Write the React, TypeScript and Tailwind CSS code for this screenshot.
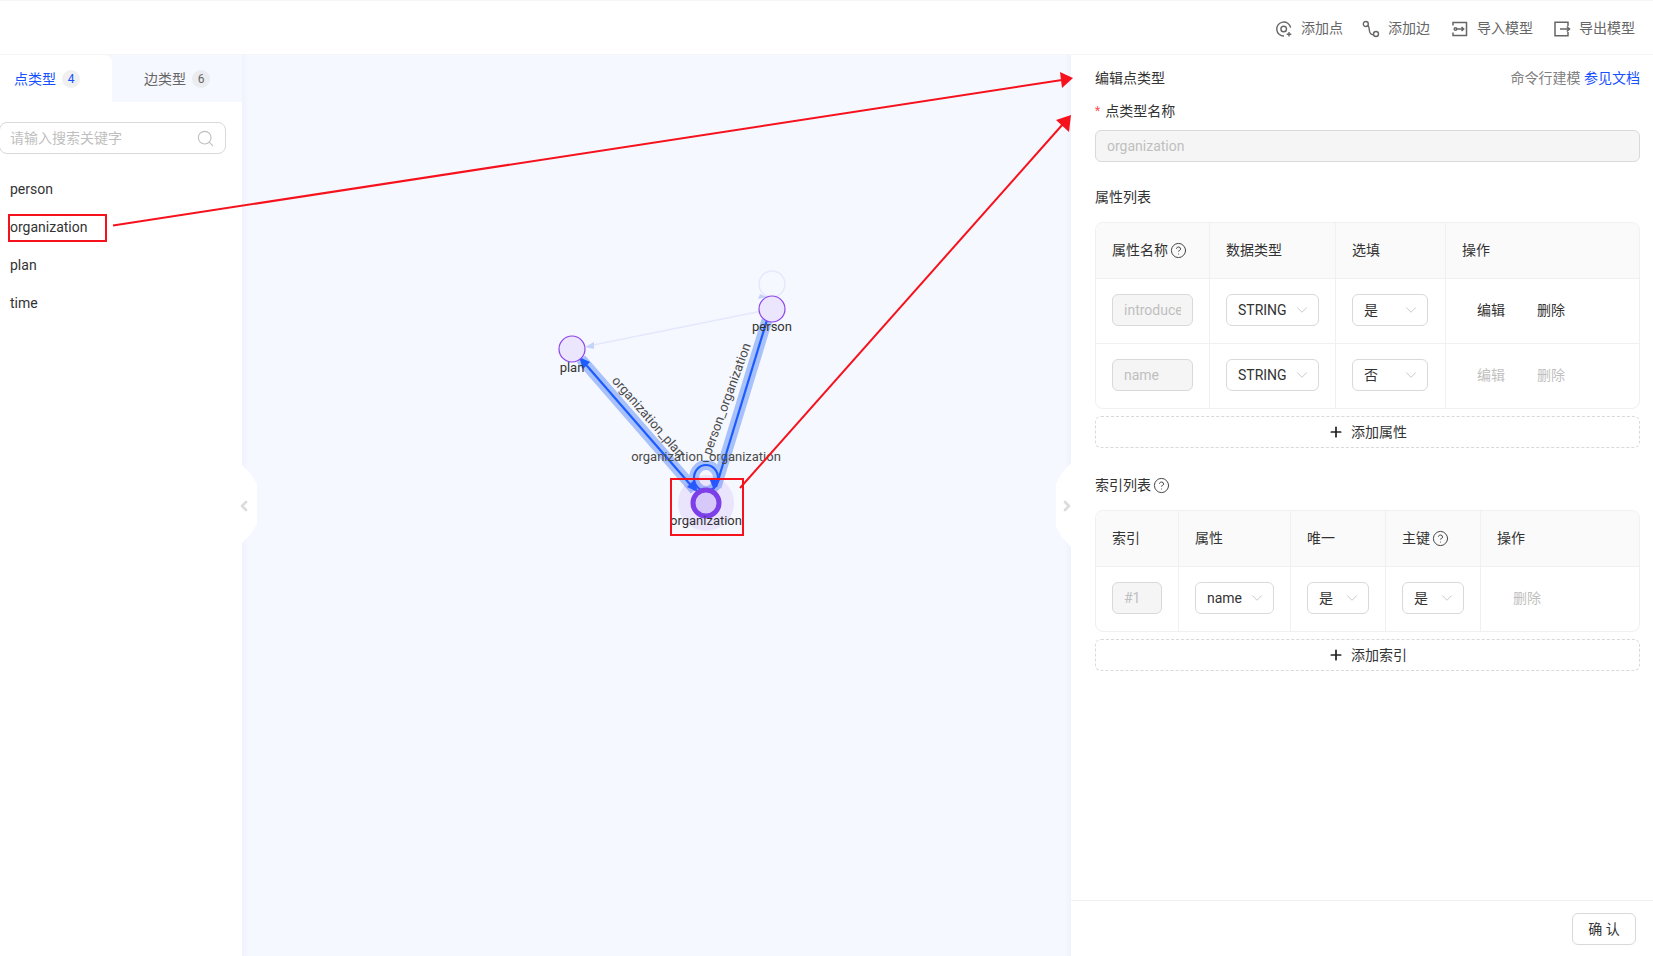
import { ChevronDown, CircleHelp, Plus, Search, ChevronLeft, ChevronRight } from "lucide-react";
import type { ReactNode } from "react";

function HeadBtn({ icon, label, className }: { icon: ReactNode; label: string; className: string }) {
  return (
    <div className={`flex items-center text-[14px] text-[#666] ${className}`}>
      {icon}
      <span>{label}</span>
    </div>
  );
}

const iconCls = "w-[18px] h-[18px] mr-[8px] shrink-0";

const AddPoint = () => (
  <svg viewBox="0 0 18 18" className={iconCls} fill="none" stroke="#666" strokeWidth="1.4">
    <path d="M15.6 7.6A7 7 0 1 0 9 16" />
    <circle cx="8.700" cy="9" r="2.800" />
    <path d="M14 12v4.600M11.700 14.300h4.600" />
  </svg>
);
const AddEdge = () => (
  <svg viewBox="0 0 18 18" className={iconCls} fill="none" stroke="#666" strokeWidth="1.4">
    <circle cx="3.800" cy="4" r="2.500" />
    <circle cx="14" cy="14" r="2.500" />
    <path d="M6 5.500C8 7.500 6.500 11.500 8.500 13.500S10.500 14.500 11.500 14.200" />
  </svg>
);
const ImportIcon = () => (
  <svg viewBox="0 0 18 18" className={iconCls} fill="none" stroke="#666" strokeWidth="1.5">
    <path d="M2 5.500V2.500h13.500v13H2V12.500" />
    <circle cx="4.500" cy="9" r="1.300" />
    <path d="M6 9h6.500M10.500 7l2.200 2-2.200 2" />
  </svg>
);
const ExportIcon = () => (
  <svg viewBox="0 0 18 18" className={iconCls} fill="none" stroke="#666" strokeWidth="1.5">
    <path d="M15 6V2.200H2v13.600h13V12" />
    <path d="M7 9h9.500M13.800 6.500l2.700 2.500-2.700 2.500" />
  </svg>
);

function Select({ value, className }: { value: string; className: string }) {
  return (
    <div className={`h-8 rounded-md border border-[#d9d9d9] bg-white flex items-center justify-between pl-[11px] pr-[7px] text-[14px] text-[#333] ${className}`}>
      <span>{value}</span>
      <ChevronDown className="w-[18px] h-[18px] text-[#bfbfbf]" strokeWidth={1.1} />
    </div>
  );
}

function Disabled({ value, className }: { value: string; className: string }) {
  return (
    <div className={`h-8 rounded-md border border-[#d9d9d9] bg-[#f5f5f5] flex items-center px-[11px] text-[14px] text-[#bfbfbf] ${className}`}>
      <span className="block w-full overflow-hidden whitespace-nowrap">{value}</span>
    </div>
  );
}

const Help = () => <CircleHelp className="w-[17px] h-[17px] text-[#444] ml-[2px]" strokeWidth={1.4} />;

function AddRow({ label }: { label: string }) {
  return (
    <div className="mt-[7px] h-8 rounded-md border border-dashed border-[#d9d9d9] flex items-center justify-center text-[14px] text-[#333]">
      <Plus className="w-[16px] h-[16px] mr-[7px] text-[#222]" strokeWidth={2.6} />
      {label}
    </div>
  );
}

const Cell = ({ children, last, data }: { children: ReactNode; last?: boolean; data?: boolean }) => (
  <div className={`px-4 flex items-center min-w-0 ${data ? "pb-[2px]" : ""} ${last ? "" : "border-r border-[#f0f0f0]"}`}>{children}</div>
);

function Actions({ muted }: { muted?: boolean }) {
  const c = muted ? "text-[#bfbfbf]" : "text-[#333]";
  return (
    <div className={`flex gap-[32px] pl-[15px] text-[14px] ${c}`}>
      <span>编辑</span>
      <span>删除</span>
    </div>
  );
}

const propCols = "grid grid-cols-[114px_126px_110px_1fr]";
const idxCols = "grid grid-cols-[83px_112px_95px_95px_1fr]";

function Graph() {
  return (
    <svg className="absolute inset-0 w-full h-full" viewBox="0 0 829 901" style={{ fontFamily: 'Roboto, "Noto Sans CJK SC", sans-serif' }}>
      <g transform="translate(-242 -55)">
        {/* faint person edges */}
        <line x1="762" y1="311" x2="588" y2="346" stroke="#e3e8fd" strokeWidth="1.500" />
        <polygon points="585,347 594,342 594,349" fill="#c5d3fb" />
        <circle cx="772" cy="284" r="13" fill="none" stroke="#e6e8fc" strokeWidth="1.500" />
        <polygon points="760,294 767,297 758,299" fill="#c5d3fb" />

        {/* halos */}
        <line x1="695" y1="490" x2="581" y2="359" stroke="#a8c1fb" strokeWidth="11" />
        <line x1="716" y1="487" x2="767" y2="320" stroke="#a8c1fb" strokeWidth="11" />
        <ellipse cx="706" cy="478" rx="12" ry="13" fill="none" stroke="#a8c1fb" strokeWidth="10" />

        {/* lines */}
        <line x1="695" y1="490" x2="581" y2="359" stroke="#1c5cff" strokeWidth="2.200" />
        <line x1="716" y1="487" x2="767" y2="320" stroke="#1c5cff" strokeWidth="2.200" />
        <ellipse cx="706" cy="478" rx="12" ry="13" fill="none" stroke="#1c5cff" strokeWidth="2.200" />
        <polygon points="579,357 590,362 583,369" fill="#1c5cff" />
        <polygon points="698,492 687,487 694,480" fill="#1c5cff" />
        <polygon points="714,490 709,478 720,480" fill="#1c5cff" />

        {/* nodes */}
        <circle cx="706" cy="503" r="28" fill="#7c3fe8" fillOpacity="0.1" />
        <circle cx="706" cy="503" r="13" fill="#d7c8fa" stroke="#7c3fe8" strokeWidth="5" />
        <circle cx="772" cy="309" r="13" fill="#ebe6fd" stroke="#8c45ea" strokeWidth="1.200" />
        <circle cx="572" cy="349" r="13" fill="#ebe6fd" stroke="#8c45ea" strokeWidth="1.200" />

        {/* labels */}
        <g fontSize="13" fill="#333" textAnchor="middle">
          <text x="772" y="331">person</text>
          <text x="572" y="372">plan</text>
          <text x="706" y="525">organization</text>
          <g fill="#4a4a4a">
            <text x="706" y="461">organization_organization</text>
            <text transform="translate(648 417) rotate(49)" y="4">organization_plan</text>
            <text transform="translate(727 399) rotate(-70)" y="4">person_organization</text>
          </g>
        </g>
      </g>
    </svg>
  );
}

function Annotations() {
  return (
    <svg className="absolute inset-0 w-full h-full pointer-events-none" viewBox="0 0 1653 956">
      <rect x="9" y="215" width="97" height="26" fill="none" stroke="#f5121d" strokeWidth="2" />
      <rect x="671" y="479" width="72" height="56" fill="none" stroke="#f5121d" strokeWidth="2" />
      <line x1="113" y1="225.500" x2="1062" y2="80" stroke="#f5121d" strokeWidth="2" />
      <polygon points="1073,78 1060,72 1062,88" fill="#f5121d" />
      <line x1="740" y1="488" x2="1063" y2="124" stroke="#f5121d" strokeWidth="2" />
      <polygon points="1071,115 1056,120 1069,132" fill="#f5121d" />
    </svg>
  );
}

export default function App() {
  return (
    <div
      className="relative w-[1653px] h-[956px] overflow-hidden bg-white flex flex-col text-[#333]"
      style={{ fontFamily: 'Roboto, "Noto Sans CJK SC", sans-serif' }}
    >
      <header className="h-[55px] shrink-0 border-t border-b border-[#f5f5f5] flex items-center pt-[2px]">
        <div className="ml-auto flex items-center">
          <HeadBtn icon={<AddPoint />} label="添加点" className="mr-[19px]" />
          <HeadBtn icon={<AddEdge />} label="添加边" className="mr-[21px]" />
          <HeadBtn icon={<ImportIcon />} label="导入模型" className="mr-[20px]" />
          <HeadBtn icon={<ExportIcon />} label="导出模型" className="mr-[18px]" />
        </div>
      </header>

      <main className="flex-1 flex min-h-0">
        {/* left sidebar */}
        <aside className="w-[242px] shrink-0">
          <div className="h-[47px] flex bg-[#f6f8ff]">
            <div className="w-[112px] bg-white rounded-tr-lg flex items-center pl-[14px] pt-[1px] text-[14px] text-[#1650ff]">
              点类型
              <span className="ml-[6px] w-[18px] h-[18px] rounded-full bg-[#f0f0f0] text-[12px] flex items-center justify-center">4</span>
            </div>
            <div className="flex-1 rounded-bl-lg bg-[#f6f8ff] flex items-center pl-[32px] pt-[1px] text-[14px] text-[#666]">
              边类型
              <span className="ml-[6px] w-[18px] h-[18px] rounded-full bg-[#ebecf0] text-[12px] flex items-center justify-center">6</span>
            </div>
          </div>
          <div className="mt-[20px] -ml-px w-[227px] h-8 rounded-lg border border-[#d9d9d9] flex items-center justify-between pl-[10px] pr-[10px] text-[14px] text-[#bfbfbf]">
            <span>请输入搜索关键字</span>
            <Search className="w-[19px] h-[19px] text-[#bfbfbf]" strokeWidth={1.4} />
          </div>
          <ul className="mt-[16px] text-[14px] text-[#333]">
            {["person", "organization", "plan", "time"].map((t) => (
              <li key={t} className="h-[38px] flex items-center pl-[10px]">{t}</li>
            ))}
          </ul>
        </aside>

        {/* canvas */}
        <section className="relative w-[829px] shrink-0 bg-[#f6f8ff]">
          <div className="absolute inset-y-0 left-0 w-[6px] bg-gradient-to-r from-[#eff2fd] to-[#f6f8ff]" />
          <div className="absolute inset-y-0 right-0 w-[6px] bg-gradient-to-l from-[#eff2fd] to-[#f6f8ff]" />
          <Graph />
          <div className="absolute left-0 top-[410px] w-[15px] h-[78px] bg-white [clip-path:polygon(0_0,60%_12%,100%_25%,100%_75%,60%_88%,0_100%)]" />
          <ChevronLeft className="absolute left-[-6px] top-[443px] w-[16px] h-[16px] text-[#dcdcdc]" strokeWidth={4} />
          <div className="absolute right-0 top-[408px] w-[15px] h-[84px] bg-white [clip-path:polygon(100%_0,40%_12%,0_25%,0_75%,40%_88%,100%_100%)]" />
          <ChevronRight className="absolute right-[-4px] top-[443px] w-[16px] h-[16px] text-[#dcdcdc]" strokeWidth={4} />
        </section>

        {/* right panel */}
        <aside className="flex-1 min-w-0 flex flex-col">
          <div className="flex-1 pl-6 pr-[13px] pt-3 text-[14px]">
            <div className="h-[22px] flex items-center justify-between">
              <span>编辑点类型</span>
              <span className="text-[#808080]">
                命令行建模 <span className="text-[#1650ff]">参见文档</span>
              </span>
            </div>
            <div className="mt-[11px] h-[22px] flex items-center">
              <span className="text-[#ff4d4f] mr-[5px] text-[12px]">*</span>点类型名称
            </div>
            <Disabled value="organization" className="mt-2 w-full" />

            <div className="mt-[24px] h-[22px] flex items-center">属性列表</div>
            <div className="mt-[14px] rounded-lg border border-[#f0f0f0] overflow-hidden">
              <div className={`${propCols} h-[55px] bg-[#fafafa]`}>
                <Cell><span>属性名称</span><Help /></Cell>
                <Cell>数据类型</Cell>
                <Cell>选填</Cell>
                <Cell last>操作</Cell>
              </div>
              <div className={`${propCols} h-[65px] border-t border-[#f0f0f0]`}>
                <Cell data><Disabled value="introduce" className="w-full" /></Cell>
                <Cell data><Select value="STRING" className="w-full" /></Cell>
                <Cell data><Select value="是" className="w-[76px]" /></Cell>
                <Cell data last><Actions /></Cell>
              </div>
              <div className={`${propCols} h-[65px] border-t border-[#f0f0f0]`}>
                <Cell data><Disabled value="name" className="w-full" /></Cell>
                <Cell data><Select value="STRING" className="w-full" /></Cell>
                <Cell data><Select value="否" className="w-[76px]" /></Cell>
                <Cell data last><Actions muted /></Cell>
              </div>
            </div>
            <AddRow label="添加属性" />

            <div className="mt-[26px] h-[22px] flex items-center">索引列表<Help /></div>
            <div className="mt-[14px] rounded-lg border border-[#f0f0f0] overflow-hidden">
              <div className={`${idxCols} h-[55px] bg-[#fafafa]`}>
                <Cell>索引</Cell>
                <Cell>属性</Cell>
                <Cell>唯一</Cell>
                <Cell><span>主键</span><Help /></Cell>
                <Cell last>操作</Cell>
              </div>
              <div className={`${idxCols} h-[65px] border-t border-[#f0f0f0]`}>
                <Cell data><Disabled value="#1" className="w-full" /></Cell>
                <Cell data><Select value="name" className="w-full" /></Cell>
                <Cell data><Select value="是" className="w-full" /></Cell>
                <Cell data><Select value="是" className="w-full" /></Cell>
                <Cell data last><div className="pl-[16px] text-[#bfbfbf]">删除</div></Cell>
              </div>
            </div>
            <AddRow label="添加索引" />
          </div>
          <footer className="h-[56px] shrink-0 border-t border-[#f0f0f0] flex items-start justify-end pt-[12px] pr-[17px]">
            <div className="w-[64px] h-8 rounded-md border border-[#d9d9d9] flex items-center justify-center text-[14px] text-[#333]">确 认</div>
          </footer>
        </aside>
      </main>

      <Annotations />
    </div>
  );
}
